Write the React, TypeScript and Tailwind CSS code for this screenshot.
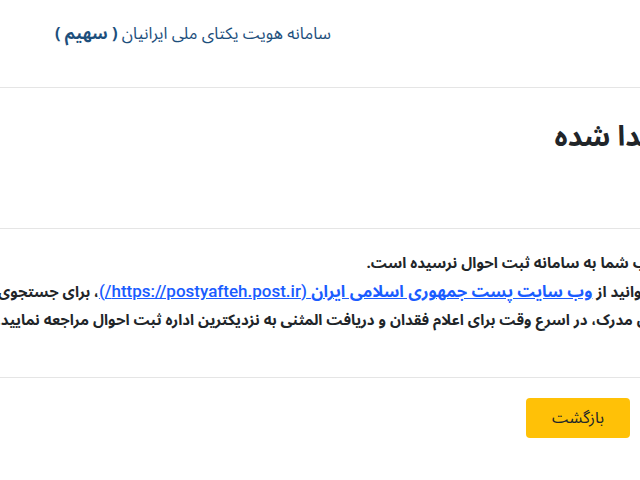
export default function App() {
  const font = "font-['Noto_Sans_Arabic','DejaVu_Sans',sans-serif]";
  return (
    <div className={`w-[640px] h-[480px] overflow-hidden bg-white text-[#212529] ${font}`}>
      <header className="h-[88px] border-b border-[#e5e5e5]">
        <div dir="rtl" className="w-[331px] pt-[22px] text-[16.5px] leading-[24px] text-[#1d4f7c]">
          سامانه هویت یکتای ملی ایرانیان <span className="font-bold">( سهیم )</span>
        </div>
      </header>

      <main dir="rtl" className="w-[770px] ml-[-30px]">
        <section className="h-[141px] border-b border-[#e5e5e5] pt-[29px] pr-[2px]">
          <h1 className="text-[28px] leading-[42px] font-bold whitespace-nowrap">مدرک پیدا شده</h1>
        </section>

        <section className="h-[149px] border-b border-[#e5e5e5] pt-[20px] pr-[72px] text-[15px] leading-[28px] font-bold whitespace-nowrap">
          <p>جناب شما به سامانه ثبت احوال نرسیده است.</p>
          <p>
            می‌توانید از{" "}
            <a href="#" className="text-[#1a5cff] underline text-[16.5px]">
              وب سایت پست جمهوری اسلامی ایران{" "}
              <span className="font-['Roboto',sans-serif] font-medium text-[17px]">(https://postyafteh.post.ir/)</span>
            </a>
            ، برای جستجوی
            <br />
            بالای مدرک، در اسرع وقت برای اعلام فقدان و دریافت المثنی به نزدیکترین اداره ثبت احوال مراجعه نمایید.
          </p>
        </section>
      </main>

      <footer dir="rtl" className="pt-[20px] pr-[10px]">
        <button className="w-[104px] h-[40px] rounded bg-[#ffc107] text-[16px] text-[#212529]">
          بازگشت
        </button>
      </footer>
    </div>
  );
}
